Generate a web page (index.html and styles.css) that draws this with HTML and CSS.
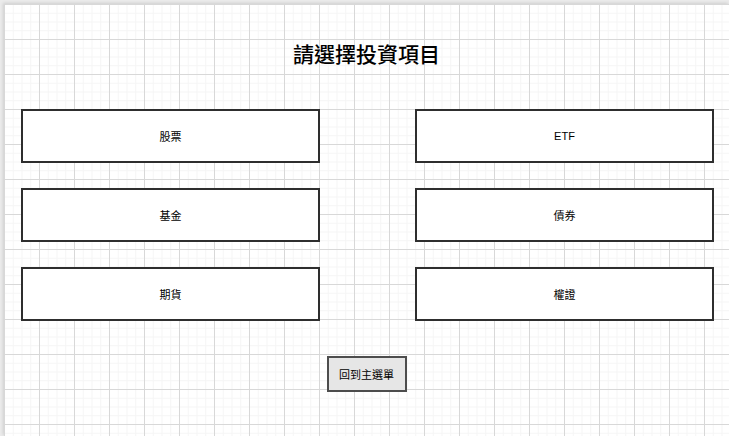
FILE: index.html
```html
<!DOCTYPE html>
<html lang="zh-Hant">
<head>
<meta charset="utf-8">
<title>請選擇投資項目</title>
<link rel="stylesheet" href="styles.css">
</head>
<body>
<div class="page">
  <h1 class="title">請選擇投資項目</h1>
  <div class="options">
    <div class="option">股票</div>
    <div class="option">ETF</div>
    <div class="option">基金</div>
    <div class="option">債券</div>
    <div class="option">期貨</div>
    <div class="option">權證</div>
  </div>
  <div class="actions">
    <div class="back">回到主選單</div>
  </div>
</div>
</body>
</html>
```
FILE: styles.css
```css
html, body {
  margin: 0;
  padding: 0;
}
body {
  width: 729px;
  height: 436px;
  overflow: hidden;
  background: #ebebeb;
  font-family: "Liberation Sans", "Noto Sans CJK TC", sans-serif;
}
.page {
  margin: 4px 0 0 4px;
  height: 432px;
  box-sizing: border-box;
  background-color: #ffffff;
  background-image:
    linear-gradient(to right, #d8d8d8 1px, transparent 1px),
    linear-gradient(to bottom, #d8d8d8 1px, transparent 1px),
    linear-gradient(to right, #f5f5f5 1px, transparent 1px),
    linear-gradient(to bottom, #f5f5f5 1px, transparent 1px);
  background-size: 35px 35px, 35px 35px, 8.75px 8.75px, 8.75px 8.75px;
  background-position: 0 0, 0 0, 0 0, 0 0;
  box-shadow: -1px -1px 3px rgba(0,0,0,0.12);
  padding-top: 37px;
  display: flex;
  flex-direction: column;
}
.title {
  margin: 0;
  font-family: "Noto Sans CJK TC", serif;
  font-weight: 500;
  font-size: 21px;
  line-height: 24px;
  text-align: center;
  color: #000;
}
.options {
  margin-top: 44px;
  padding-left: 17px;
  display: grid;
  grid-template-columns: 299px 299px;
  grid-auto-rows: 54px;
  column-gap: 95px;
  row-gap: 25px;
}
.option {
  box-sizing: border-box;
  border: 2px solid #2e2e2e;
  background: #ffffff;
  display: flex;
  align-items: center;
  justify-content: center;
  font-size: 11px;
  color: #000;
}
.actions {
  margin-top: 35px;
  display: flex;
  justify-content: center;
}
.back {
  box-sizing: border-box;
  width: 80px;
  height: 36px;
  border: 2px solid #4d4d4d;
  background: #e6e6e6;
  display: flex;
  align-items: center;
  justify-content: center;
  font-size: 11px;
  color: #000;
}
```
